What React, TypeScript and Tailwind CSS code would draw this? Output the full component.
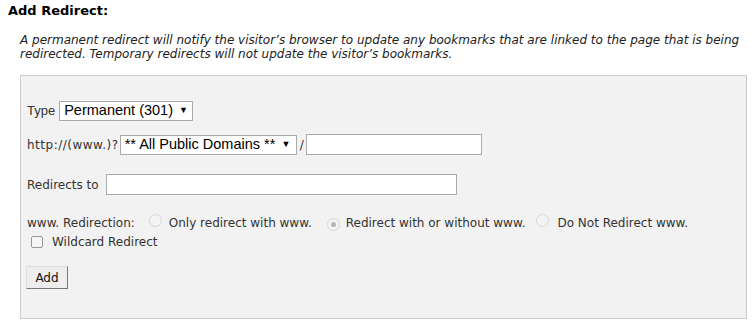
import React from "react";

const Radio = ({ checked }: { checked?: boolean }) => (
  <span className="inline-flex h-[13px] w-[13px] shrink-0 items-center justify-center rounded-full border border-[#d6d6d6] bg-[#f3f3f3]">
    {checked && <span className="h-[5px] w-[5px] rounded-full bg-[#b5b5b5]" />}
  </span>
);

export default function App() {
  return (
    <div className="h-[335px] w-[755px] bg-white text-[#333] [font-family:'DejaVu_Sans',Verdana,sans-serif]">
      <div className="pl-[8px] pt-[3px] text-[13px] font-bold leading-[16px] text-black">Add Redirect:</div>
      <p className="ml-[20px] mt-[14px] w-[730px] text-[12px] italic leading-[14px] text-[#222]">
        A permanent redirect will notify the visitor’s browser to update any bookmarks that are linked to the page that is being redirected. Temporary redirects will not update the visitor’s bookmarks.
      </p>
      <div className="ml-[20px] mt-[14px] h-[244px] w-[727px] border border-[#cccccc] bg-[#f2f2f2] pl-[5px] pt-[25px] text-[12px]">
        <div className="flex h-[20px] items-center">
          <span className="ml-[1px] mr-[4px] [font-family:'Liberation_Sans',Arial,sans-serif] text-[13px]">Type</span>
          <div className="flex h-[20px] w-[134px] items-center border border-[#aaa] bg-white pl-[4px] [font-family:'Liberation_Sans',Arial,sans-serif] text-[14.5px] text-black">
            <span>Permanent (301)</span>
            <span className="ml-[6px] text-[9px]">▼</span>
          </div>
        </div>
        <div className="mt-[13px] flex h-[21px] items-center pl-[1px]">
          <span className="tracking-[0.5px]">http://(www.)?</span>
          <div className="ml-[1px] flex h-[20px] w-[177px] items-center border border-[#aaa] bg-white pl-[4px] [font-family:'Liberation_Sans',Arial,sans-serif] text-[14.5px] text-black">
            <span>** All Public Domains **</span>
            <span className="ml-[6px] text-[9px]">▼</span>
          </div>
          <span className="ml-[3px]">/</span>
          <div className="ml-[2px] h-[21px] w-[176px] border border-[#aaa] bg-white" />
        </div>
        <div className="mt-[19px] flex h-[21px] items-center pl-[1px]">
          <span>Redirects to</span>
          <div className="ml-[7px] h-[21px] w-[351px] border border-[#aaa] bg-white" />
        </div>
        <div className="mt-[20px] flex h-[16px] items-center pl-[1px]">
          <span>www. Redirection:</span>
          <span className="ml-[14px]"><Radio /></span>
          <span className="ml-[7px]">Only redirect with www.</span>
          <span className="ml-[15px]"><Radio checked /></span>
          <span className="ml-[6px]">Redirect with or without www.</span>
          <span className="ml-[11px]"><Radio /></span>
          <span className="ml-[8px]">Do Not Redirect www.</span>
        </div>
        <div className="mt-[3px] flex h-[16px] items-center">
          <span className="ml-[5px] h-[12px] w-[12px] rounded-[2px] border border-[#999] bg-[#f6f6f6]" />
          <span className="ml-[9px]">Wildcard Redirect</span>
        </div>
        <button className="mt-[16px] h-[23px] w-[42px] border border-b-[#777] border-l-[#ddd] border-r-[#777] border-t-[#ddd] bg-[#eeeeee] text-[12px] text-[#111]">
          Add
        </button>
      </div>
    </div>
  );
}
